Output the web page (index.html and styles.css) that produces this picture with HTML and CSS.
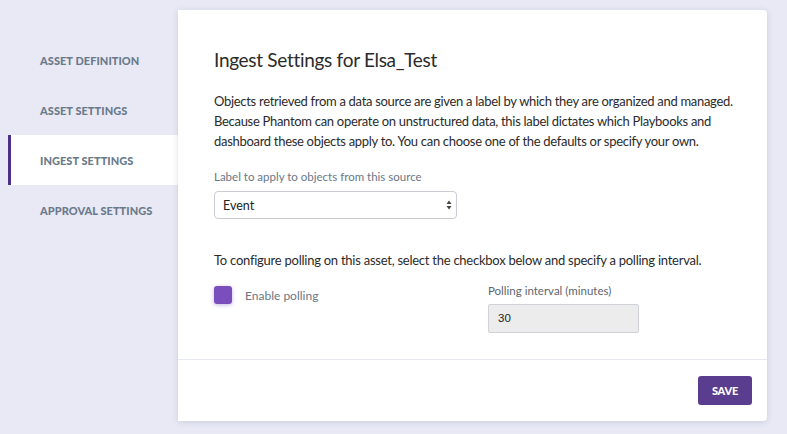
FILE: index.html
```html
<!DOCTYPE html>
<html>
<head>
<meta charset="utf-8">
<link rel="stylesheet" href="styles.css">
</head>
<body>
<nav class="sidebar">
  <div class="nav-item">ASSET DEFINITION</div>
  <div class="nav-item">ASSET SETTINGS</div>
  <div class="nav-item active">INGEST SETTINGS</div>
  <div class="nav-item">APPROVAL SETTINGS</div>
</nav>
<main class="card">
  <div class="card-body">
    <h1 class="title">Ingest Settings for Elsa_Test</h1>
    <p class="desc">Objects retrieved from a data source are given a label by which they are organized and managed.<br>Because Phantom can operate on unstructured data, this label dictates which Playbooks and<br>dashboard these objects apply to. You can choose one of the defaults or specify your own.</p>
    <label class="field-label">Label to apply to objects from this source</label>
    <div class="select">
      <span>Event</span>
      <svg class="arrows" width="6" height="10" viewBox="0 0 6 10"><path d="M3 0.5 L5.5 4 L0.5 4 Z M3 9.5 L5.5 6 L0.5 6 Z" fill="#444"/></svg>
    </div>
    <p class="poll-text">To configure polling on this asset, select the checkbox below and specify a polling interval.</p>
    <div class="poll-row">
      <div class="check-col">
        <span class="checkbox"></span>
        <span class="check-label">Enable polling</span>
      </div>
      <div class="interval-col">
        <div class="interval-label">Polling interval (minutes)</div>
        <div class="interval-input">30</div>
      </div>
    </div>
  </div>
  <div class="card-footer">
    <button class="save">SAVE</button>
  </div>
</main>
</body>
</html>
```
FILE: styles.css
```css
html, body {
  margin: 0;
  padding: 0;
}
body {
  background: #e8e9f5;
  display: flex;
  align-items: flex-start;
  font-family: "Lato", "Liberation Sans", sans-serif;
  width: 787px;
  height: 434px;
  overflow: hidden;
}
.sidebar {
  width: 170px;
  padding-left: 8px;
  padding-top: 35px;
}
.nav-item {
  height: 50px;
  display: flex;
  align-items: center;
  padding-left: 32px;
  font-size: 11px;
  font-weight: 900;
  color: #6a7a8b;
  letter-spacing: 0.05px;
}
.nav-item.active {
  background: #fff;
  border-left: 3px solid #4d2f86;
  padding-left: 29px;
}
.card {
  margin-top: 10px;
  width: 589px;
  height: 411px;
  background: #fff;
  border-radius: 0 4px 4px 0;
  box-shadow: 0 1px 6px rgba(60, 60, 110, 0.16);
  display: flex;
  flex-direction: column;
}
.card-body {
  height: 349px;
  padding: 38px 0 0 36px;
  box-sizing: border-box;
}
.title {
  margin: 0;
  font-size: 19px;
  font-weight: 400;
  line-height: 24px;
  letter-spacing: -0.3px;
  color: #2b2b2b;
}
.desc {
  margin: 19px 0 0;
  font-size: 13px;
  line-height: 20px;
  letter-spacing: -0.3px;
  color: #2b2b2b;
  white-space: nowrap;
}
.field-label {
  display: block;
  margin-top: 18px;
  font-size: 11.5px;
  line-height: 16px;
  color: #6b7785;
}
.select {
  margin-top: 6px;
  width: 243px;
  height: 28px;
  box-sizing: border-box;
  border: 1px solid #c9cdd3;
  border-radius: 4px;
  display: flex;
  align-items: center;
  justify-content: space-between;
  padding: 0 4px 0 8px;
  font-size: 12.5px;
  color: #222;
}
.poll-text {
  margin: 31px 0 0;
  font-size: 13px;
  line-height: 20px;
  letter-spacing: -0.25px;
  color: #2b2b2b;
}
.poll-row {
  display: flex;
  margin-top: 12px;
}
.check-col {
  width: 274px;
  display: flex;
  align-items: center;
  height: 22px;
  margin-top: 2px;
}
.checkbox {
  width: 18px;
  height: 18px;
  border-radius: 3px;
  background: #7a4fbd;
  box-shadow: 0 1px 4px rgba(90, 50, 160, 0.35);
}
.check-label {
  margin-left: 13px;
  font-size: 12px;
  color: #6b7785;
}
.interval-label {
  font-size: 11.5px;
  line-height: 16px;
  color: #5d6670;
  margin-top: 1px;
}
.interval-input {
  margin-top: 5px;
  width: 151px;
  height: 29px;
  box-sizing: border-box;
  background: #ececec;
  border: 1px solid #cfd2d6;
  border-radius: 2px;
  font-family: "Liberation Sans", sans-serif;
  font-size: 11.5px;
  line-height: 27px;
  padding-left: 9px;
  color: #222;
}
.card-footer {
  border-top: 1px solid #e6e9ef;
  display: flex;
  justify-content: flex-end;
  padding: 16px 15px 0 0;
}
.save {
  width: 54px;
  height: 29px;
  background: #5b3d8f;
  color: #fff;
  border: none;
  border-radius: 3px;
  font-family: "Lato", sans-serif;
  font-weight: 900;
  font-size: 11px;
  letter-spacing: -0.2px;
  padding: 0;
}
```
